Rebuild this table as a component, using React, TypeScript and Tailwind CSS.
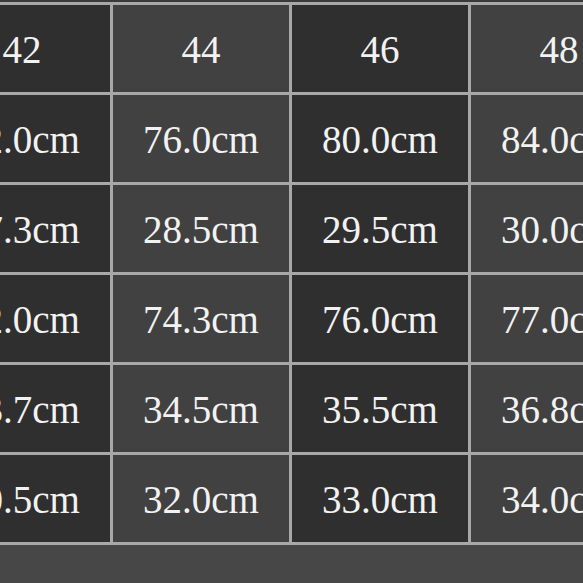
const sizes = ["42", "44", "46", "48"];

const rows = [
  ["72.0cm", "76.0cm", "80.0cm", "84.0cm"],
  ["27.3cm", "28.5cm", "29.5cm", "30.0cm"],
  ["72.0cm", "74.3cm", "76.0cm", "77.0cm"],
  ["33.7cm", "34.5cm", "35.5cm", "36.8cm"],
  ["30.5cm", "32.0cm", "33.0cm", "34.0cm"],
];

function Cell({ value, col }: { value: string; col: number }) {
  return (
    <div
      className={`h-[87px] pt-[3px] flex items-center justify-center text-[39px] text-[#f2f2f2] ${
        col % 2 === 0 ? "bg-[#2f2f2f]" : "bg-[#414141]"
      }`}
    >
      {value}
    </div>
  );
}

export default function App() {
  return (
    <div
      className="w-[583px] h-[583px] overflow-hidden bg-[#474747]"
      style={{ fontFamily: '"Liberation Serif", "DejaVu Serif", serif' }}
    >
      <div className="h-[2px] bg-[#3a3a3a]" />
      <div className="ml-[-69px] w-max grid grid-cols-[repeat(4,176px)] gap-[3px] p-[3px] bg-[#a8a8a8]">
        {sizes.map((s, i) => (
          <Cell key={s} value={s} col={i} />
        ))}
        {rows.map((row, r) =>
          row.map((v, i) => <Cell key={`${r}-${i}`} value={v} col={i} />),
        )}
      </div>
    </div>
  );
}
